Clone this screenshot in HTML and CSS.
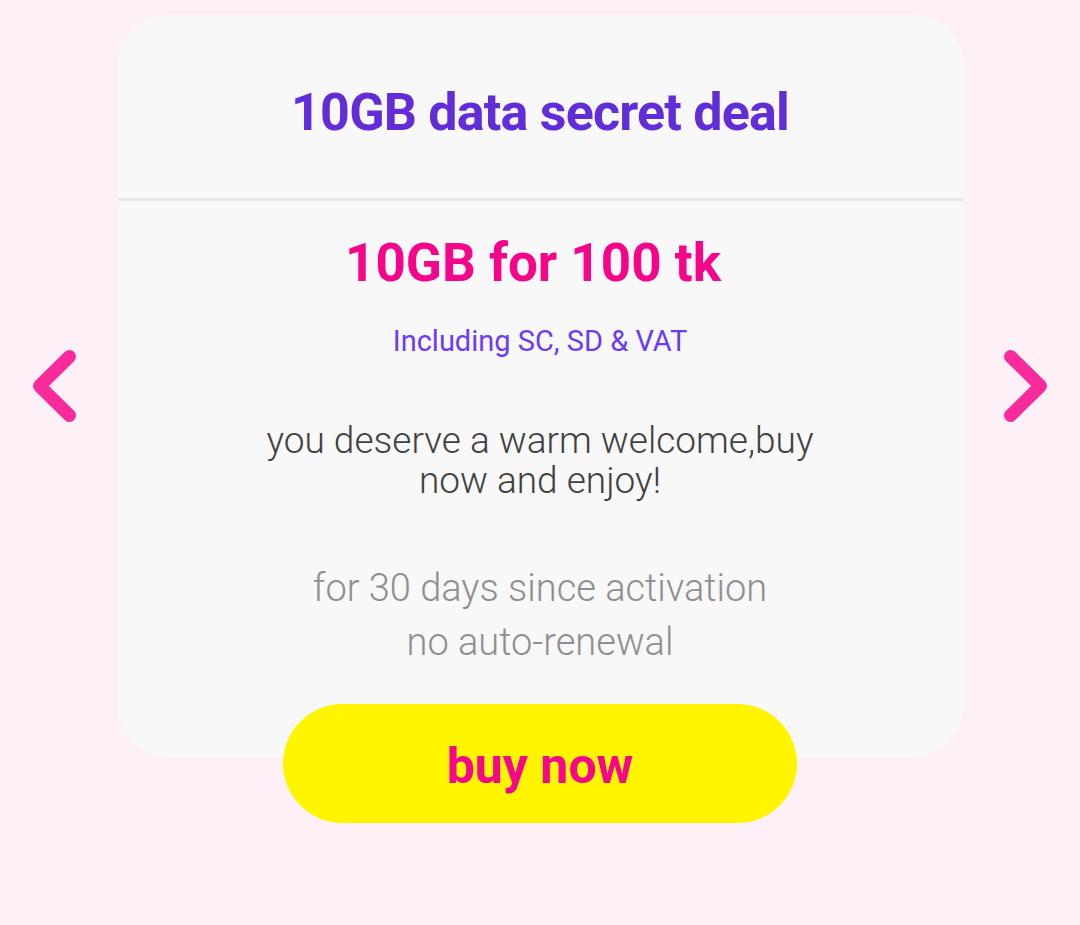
FILE: index.html
```html
<!DOCTYPE html>
<html lang="en">
<head>
<meta charset="utf-8">
<title>10GB data secret deal</title>
<link rel="stylesheet" href="styles.css">
</head>
<body>
<main class="carousel">
  <button class="nav nav-prev" aria-label="Previous">
    <svg viewBox="0 0 44 72" width="44" height="72"><path d="M37.5 6.5 L7.5 36 L37.5 65.5" fill="none" stroke="currentColor" stroke-width="13" stroke-linecap="round" stroke-linejoin="round"/></svg>
  </button>
  <section class="offer">
    <div class="card">
      <header class="card-head">
        <h1 class="title">10GB data secret deal</h1>
      </header>
      <div class="card-body">
        <p class="price">10GB for 100 tk</p>
        <p class="tax">Including SC, SD &amp; VAT</p>
        <p class="desc">you deserve a warm welcome,buy<br>now and enjoy!</p>
        <p class="validity">for 30 days since activation<br>no auto-renewal</p>
      </div>
    </div>
    <button class="buy">buy now</button>
  </section>
  <button class="nav nav-next" aria-label="Next">
    <svg viewBox="0 0 44 72" width="44" height="72"><path d="M6.5 6.5 L36.5 36 L6.5 65.5" fill="none" stroke="currentColor" stroke-width="13" stroke-linecap="round" stroke-linejoin="round"/></svg>
  </button>
</main>
</body>
</html>
```
FILE: styles.css
```css
html, body {
  margin: 0;
  padding: 0;
}
body {
  background: #fdf0f6;
  font-family: Roboto, "Noto Sans", sans-serif;
  width: 1080px;
  height: 925px;
}
.carousel {
  display: flex;
  justify-content: space-between;
  align-items: flex-start;
  padding: 15px 32px 0 32px;
}
.nav {
  background: none;
  border: 0;
  padding: 0;
  margin-top: 335px;
  color: #f72b9c;
  width: 44px;
  height: 72px;
  display: block;
  cursor: pointer;
}
.nav svg { display: block; }
.offer {
  width: 845px;
  display: flex;
  flex-direction: column;
  align-items: center;
}
.card {
  width: 100%;
  background: #f8f8f8;
  border-radius: 50px;
  height: 742px;
  box-sizing: border-box;
}
.card-head {
  height: 183px;
  border-bottom: 3px solid #e6e6e6;
  display: flex;
  align-items: center;
  justify-content: center;
}
.title {
  margin: 0;
  font-size: 52px;
  font-weight: 700;
  color: #602dd9;
  letter-spacing: -0.8px;
  padding-top: 12px;
}
.card-body {
  display: flex;
  flex-direction: column;
  align-items: center;
  text-align: center;
}
.card-body p { margin: 0; }
.price {
  margin-top: 30px !important;
  padding-right: 14px;
  font-size: 53px;
  font-weight: 700;
  color: #f5058a;
  line-height: 64px;
}
.tax {
  margin-top: 28px !important;
  font-size: 29px;
  color: #6d3bf6;
  line-height: 36px;
}
.desc {
  margin-top: 62px !important;
  font-size: 37px;
  font-weight: 300;
  color: #404040;
  line-height: 40px;
}
.validity {
  margin-top: 60px !important;
  font-size: 38px;
  font-weight: 300;
  color: #8f8f8f;
  line-height: 54px;
}
.buy {
  margin-top: -53px;
  width: 514px;
  height: 119px;
  border: 0;
  border-radius: 60px;
  background: #fff500;
  color: #f4068d;
  font-family: Roboto, "Noto Sans", sans-serif;
  font-size: 50px;
  font-weight: 700;
  padding-top: 6px;
  cursor: pointer;
}
```
